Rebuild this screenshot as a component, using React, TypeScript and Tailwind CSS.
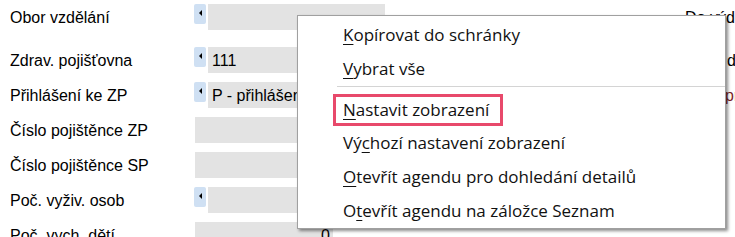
import type { ReactNode } from "react";

interface FieldRowProps {
    label: string;
    arrow?: boolean;
    value?: string;
    boxClass?: string;
    right?: ReactNode;
}

function ArrowButton() {
    return (
        <div className="mr-[2px] h-[20px] w-[12px] rounded-[2px] bg-[#cfe0f3] pl-[5px] pt-[6px]">
            <div className="h-0 w-0 border-y-[3px] border-r-[3px] border-y-transparent border-r-black" />
        </div>
    );
}

function FieldRow({ label, arrow, value, boxClass, right }: FieldRowProps) {
    return (
        <div className="flex h-[35px] items-start pt-[4px]">
            <div className="flex h-[26px] w-[194px] shrink-0 items-center pl-[10px] pt-[2px]">{label}</div>
            {arrow ? <ArrowButton /> : <div className="w-[1px]" />}
            <div className={`flex h-[26px] shrink-0 items-center bg-[#e3e3e3] pl-[4px] pt-[1px] ${boxClass ?? (arrow ? "w-[177px]" : "w-[190px]")}`}>
                {value}
            </div>
            {right && <div className="ml-auto flex h-[26px] w-[50px] shrink-0 items-center overflow-hidden whitespace-nowrap pt-[2px]">{right}</div>}
        </div>
    );
}

function MenuItem({ children }: { children: ReactNode }) {
    return <div className="flex h-[34px] items-center whitespace-nowrap pl-[45px]">{children}</div>;
}

function Key({ children }: { children: ReactNode }) {
    return <span className="underline decoration-1 underline-offset-[3px]">{children}</span>;
}

function ContextMenu() {
    return (
        <div className="absolute left-[297px] top-[15px] w-[429px] border border-[#a0a0a0] bg-white pt-[2px] font-['Open_Sans',sans-serif] text-[17px] text-[#111] shadow-[2px_2px_3px_rgba(0,0,0,0.45)]">
            <MenuItem>
                <Key>K</Key>opírovat do schránky
            </MenuItem>
            <MenuItem>
                <Key>V</Key>ybrat vše
            </MenuItem>
            <div className="mb-[5px] ml-[39px] h-px bg-[#d4d4d4]" />
            <MenuItem>
                <span className="-ml-[10px] mt-[2px] flex h-[32px] items-center border-[3px] border-[#e8496b] pl-[7px] pr-[11px]">
                    <span>
                        <Key>N</Key>astavit zobrazení
                    </span>
                </span>
            </MenuItem>
            <MenuItem>
                Vý<Key>c</Key>hozí nastavení zobrazení
            </MenuItem>
            <MenuItem>
                <Key>O</Key>tevřít agendu pro dohledání detailů
            </MenuItem>
            <MenuItem>
                O<Key>t</Key>evřít agendu na záložce Seznam
            </MenuItem>
        </div>
    );
}

export default function App() {
    return (
        <div className="relative h-[237px] w-[735px] overflow-hidden bg-white font-['Liberation_Sans',Arial,sans-serif] text-[16px] text-black">
            <div className="flex flex-col">
                <FieldRow label="Obor vzdělání" arrow right={<span>Do výdeje</span>} />
                <div className="h-[8px]" />
                <FieldRow label="Zdrav. pojišťovna" arrow value="111" right={<span className="pl-[42px]">d</span>} />
                <FieldRow label="Přihlášení ke ZP" arrow value="P - přihlášen k pojištění" right={<span className="pl-[40px] text-[#7a1f1f]">pr</span>} />
                <FieldRow label="Číslo pojištěnce ZP" />
                <FieldRow label="Číslo pojištěnce SP" />
                <FieldRow label="Poč. vyživ. osob" arrow />
                <div className="flex h-[35px] items-start pt-[4px]">
                    <div className="flex h-[26px] w-[194px] shrink-0 items-center pl-[10px] pt-[2px]">Poč. vych. dětí</div>
                    <div className="w-[1px]" />
                    <div className="flex h-[26px] w-[138px] shrink-0 items-center justify-end bg-[#e3e3e3] pr-[3px] pt-[1px]">0</div>
                </div>
            </div>
            <ContextMenu />
        </div>
    );
}
